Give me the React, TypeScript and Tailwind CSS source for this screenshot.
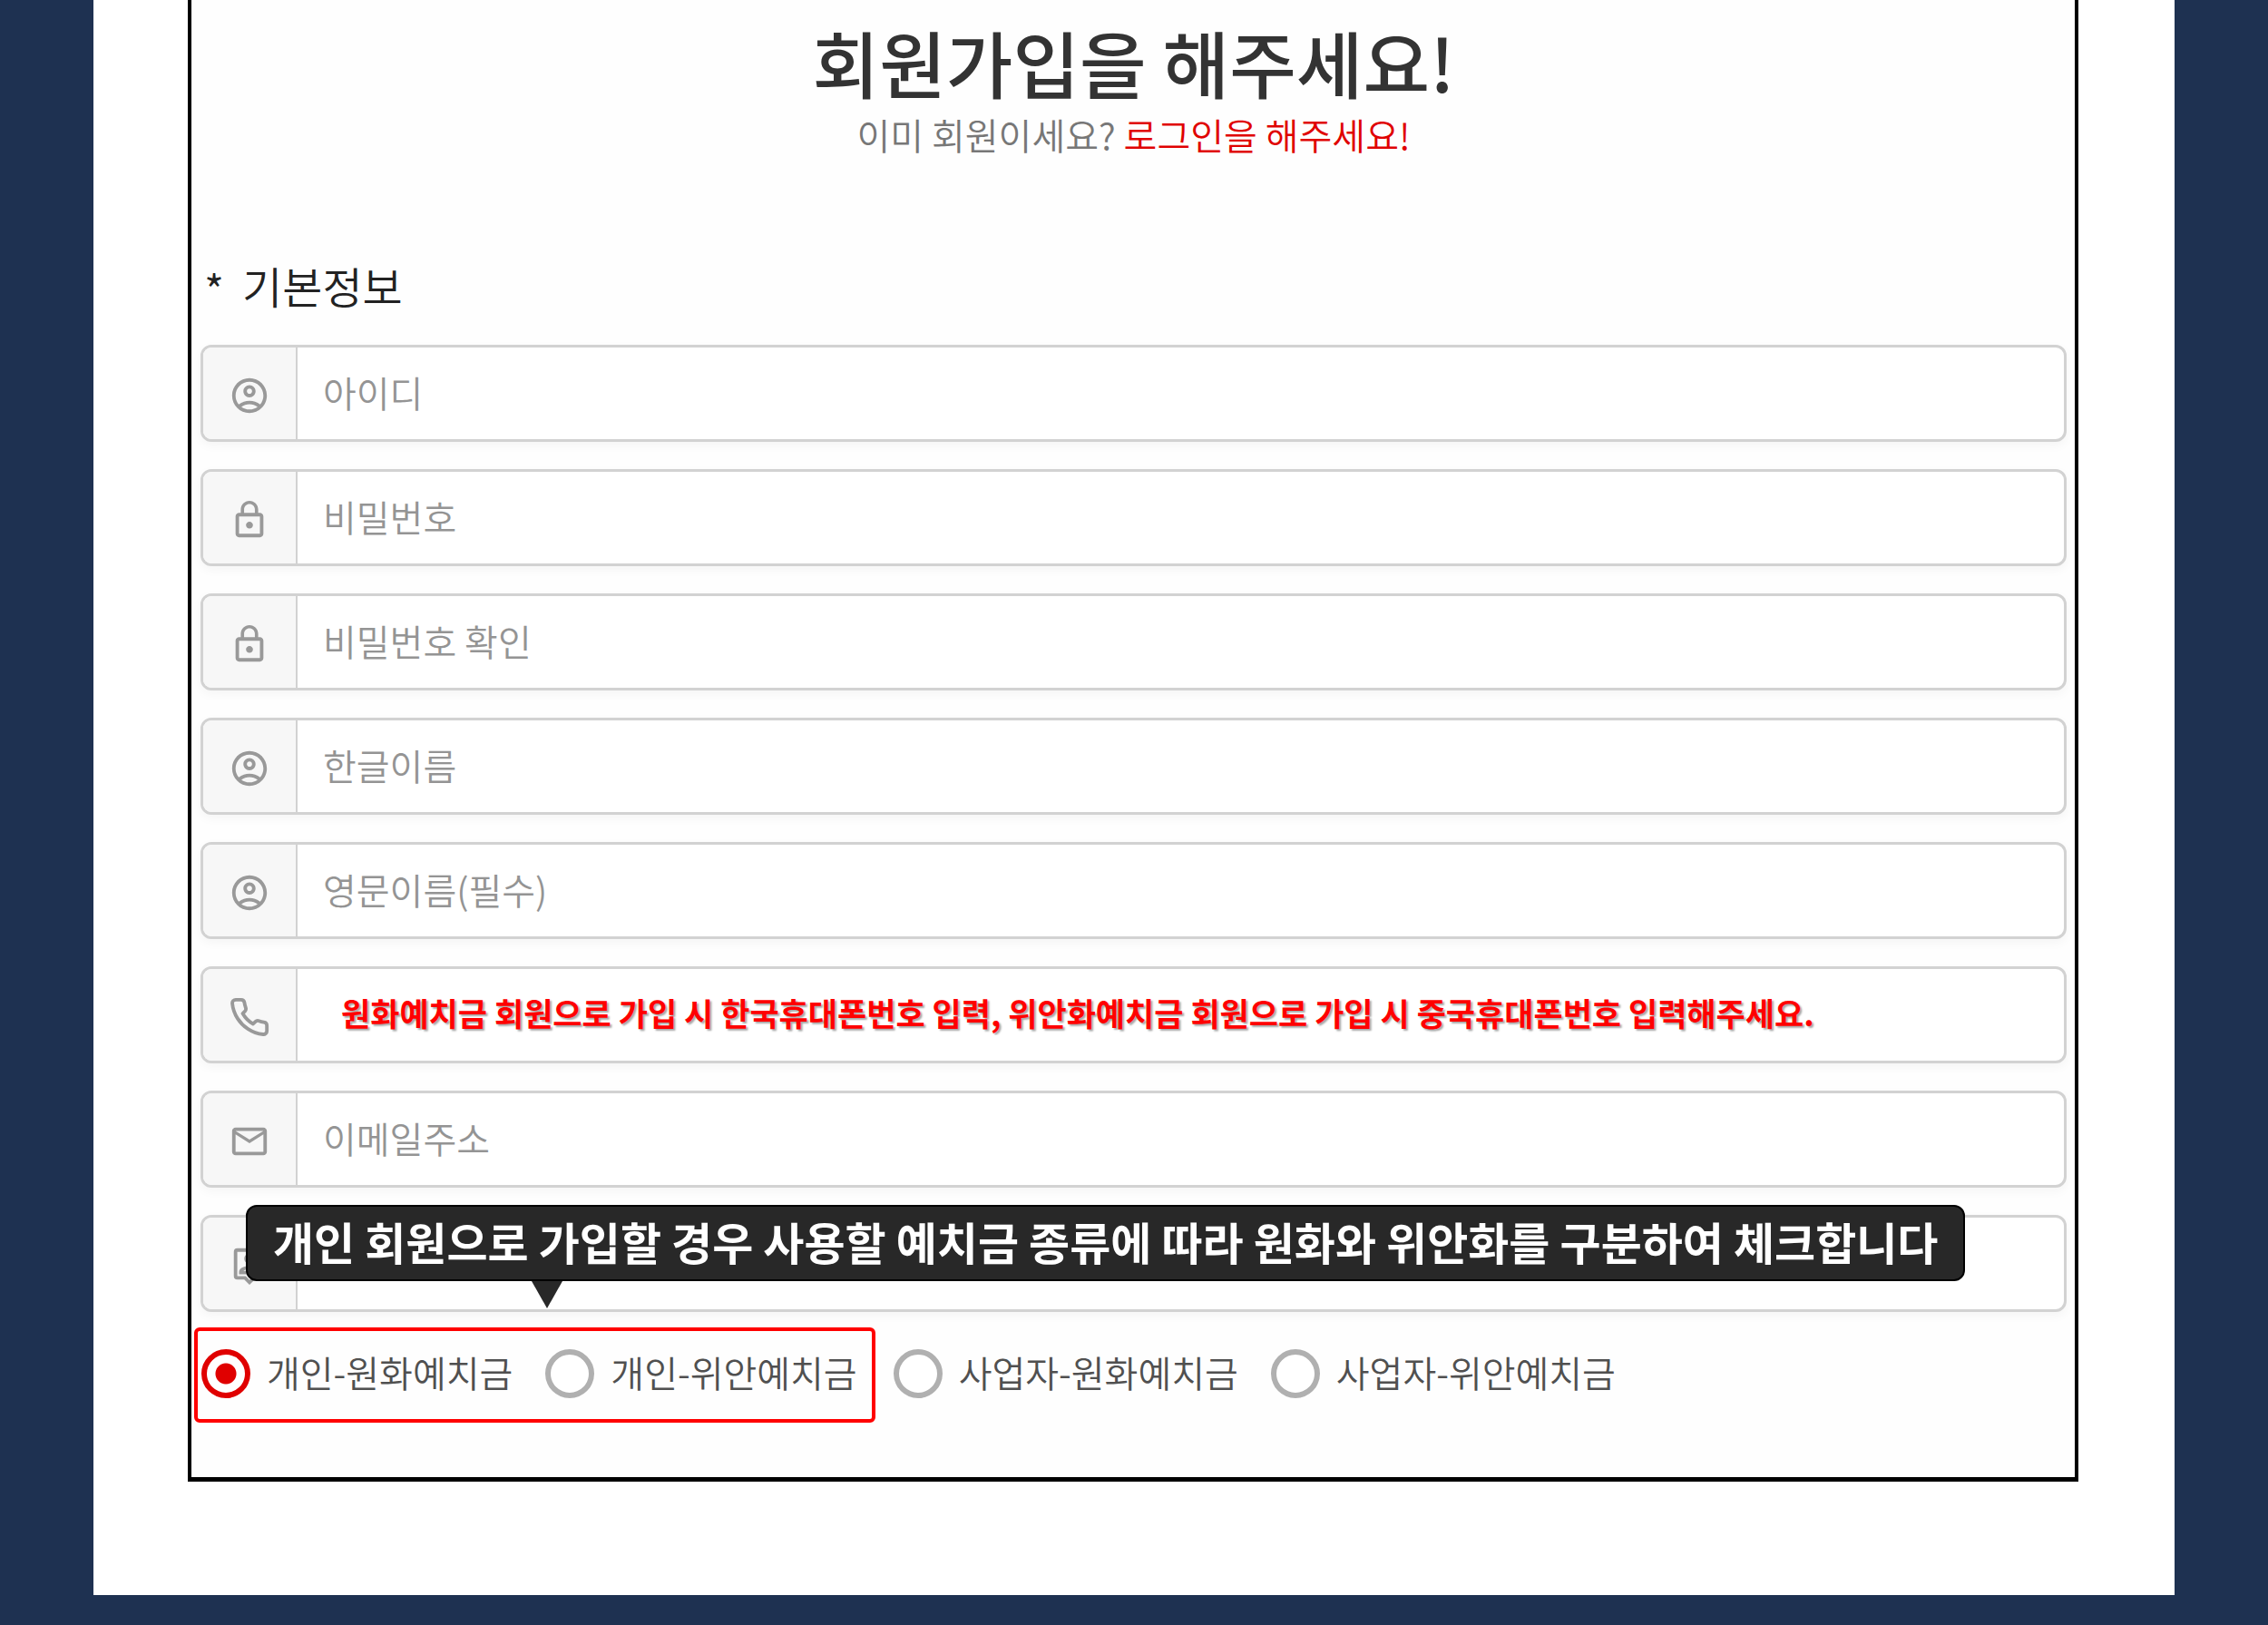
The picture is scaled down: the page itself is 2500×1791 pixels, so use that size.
import React from "react";
import { MdOutlineAccountCircle, MdLockOutline, MdMailOutline, MdOutlinePersonPin } from "react-icons/md";
import { FiPhone } from "react-icons/fi";
import type { IconType } from "react-icons";

type FieldProps = { id: string; label: string; Icon: IconType; type?: string; notice?: boolean };

const fields: FieldProps[] = [
  { id: "userid", label: "아이디", Icon: MdOutlineAccountCircle },
  { id: "password", label: "비밀번호", Icon: MdLockOutline, type: "password" },
  { id: "password2", label: "비밀번호 확인", Icon: MdLockOutline, type: "password" },
  { id: "koname", label: "한글이름", Icon: MdOutlineAccountCircle },
  { id: "enname", label: "영문이름(필수)", Icon: MdOutlineAccountCircle },
  {
    id: "phone",
    label: "원화예치금 회원으로 가입 시 한국휴대폰번호 입력, 위안화예치금 회원으로 가입 시 중국휴대폰번호 입력해주세요.",
    Icon: FiPhone,
    type: "tel",
    notice: true,
  },
  { id: "email", label: "이메일주소", Icon: MdMailOutline, type: "email" },
];

function Field({ id, label, Icon, type = "text", notice = false }: FieldProps) {
  return (
    <div className="flex h-[107px] overflow-hidden rounded-xl border-[3px] border-[#d2d2d2] bg-white shadow-[0_4px_12px_rgba(0,0,0,0.04)]">
      <label htmlFor={id} className="flex w-[104px] shrink-0 items-center justify-center border-r-2 border-[#d2d2d2] bg-[#f7f7f7] pt-1">
        <Icon className="size-[46px] text-[#999]" aria-hidden="true" />
      </label>
      <input
        id={id}
        type={type}
        placeholder={label}
        aria-label={label || "회원 구분"}
        className={
          notice
            ? "min-w-0 flex-1 pb-1 pl-12 text-[35px] font-bold outline-none [text-shadow:2px_2px_2px_rgba(0,0,0,0.35)] placeholder:text-[#ff0000]"
            : "min-w-0 flex-1 pb-1 pl-7 text-[40px] font-[350] outline-none placeholder:text-[#949494]"
        }
      />
    </div>
  );
}

function Radio({ id, label, checked = false }: { id: string; label: string; checked?: boolean }) {
  return (
    <label htmlFor={id} className="flex items-center gap-[18px] whitespace-nowrap text-[40px] font-[350] text-[#505050]">
      <input
        id={id}
        type="radio"
        name="deposit"
        defaultChecked={checked}
        className="size-[54px] shrink-0 appearance-none rounded-full border-[6px] border-[#b0b0b0] bg-white checked:border-[#e00000] checked:bg-[radial-gradient(circle,#e00000_11px,#fff_12px)]"
      />
      <span className="pb-1">{label}</span>
    </label>
  );
}

export default function App() {
  return (
    <div className="bg-[#1e3151] px-[103px] pb-[33px] font-['Noto_Sans_CJK_KR',sans-serif]">
      <main className="bg-white pb-[125px] pl-[104px] pr-[106px]">
        <form className="border-x-4 border-b-[5px] border-black bg-[#fefefe] pb-[60px] pl-[10px] pr-[9px] pt-3">
          <h1 className="text-center text-[80px] font-medium leading-[110px] text-[#333]">회원가입을 해주세요!</h1>
          <p className="text-center text-[40px] font-[350] leading-[52px] text-[#777]">
            이미 회원이세요?{" "}
            <a href="#login" className="text-[#e00000]">
              로그인을 해주세요!
            </a>
          </p>
          <h2 className="mt-[104px] flex gap-5 pl-1 text-[48px] font-[350] leading-[72px] text-[#222]">
            <span className="pt-1">*</span>
            <span>기본정보</span>
          </h2>

          <div className="mt-[26px] flex flex-col gap-[30px]">
            {fields.map((f) => (
              <Field key={f.id} {...f} />
            ))}
            <div className="relative">
              <Field id="member-type" label="" Icon={MdOutlinePersonPin} />
              <div role="tooltip" className="absolute -top-[11px] left-[50px]">
                <div className="flex h-[84px] items-center whitespace-nowrap rounded-xl border-2 border-black bg-[#282828] px-7 pb-1 text-[49px] font-bold text-white">
                  개인 회원으로 가입할 경우 사용할 예치금 종류에 따라 원화와 위안화를 구분하여 체크합니다
                </div>
                <div className="ml-[315px] h-[30px] w-[34px] bg-[#282828] [clip-path:polygon(0_0,100%_0,50%_100%)]" />
              </div>
            </div>
          </div>

          <div role="radiogroup" aria-label="회원 구분 선택" className="mt-[17px] flex items-center gap-5">
            <div className="-ml-[7px] flex h-[105px] items-center gap-9 rounded-md border-4 border-[#ff0000] pb-1 pl-1 pr-4">
              <Radio id="p-krw" label="개인-원화예치금" checked />
              <Radio id="p-cny" label="개인-위안예치금" />
            </div>
            <div className="flex items-center gap-9 pb-1">
              <Radio id="b-krw" label="사업자-원화예치금" />
              <Radio id="b-cny" label="사업자-위안예치금" />
            </div>
          </div>
        </form>
      </main>
    </div>
  );
}
